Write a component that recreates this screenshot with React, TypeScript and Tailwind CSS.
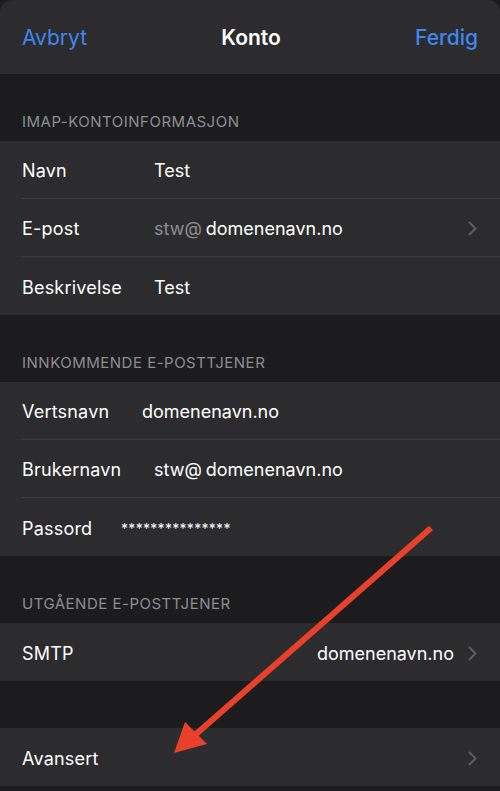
const font = { fontFamily: 'Inter, "Noto Sans", sans-serif' };

function Chevron() {
  return (
    <svg width="9" height="15" viewBox="0 0 9 15" className="shrink-0">
      <path d="M1.5 1.5l6 6-6 6" fill="none" stroke="#5d5d62" strokeWidth={2} strokeLinecap="round" strokeLinejoin="round" />
    </svg>
  );
}

type Row = { label: string; value?: React.ReactNode; valueX?: string; chevron?: boolean; right?: boolean };

function Group({ rows }: { rows: Row[] }) {
  return (
    <div className="bg-[#2c2c2e]">
      {rows.map((r, i) => (
        <div key={r.label} className="pl-[22px]">
          <div className={`h-[58px] flex items-center pt-[2px] pr-[23px] ${i < rows.length - 1 ? "border-b border-[#3d3d41]" : ""}`}>
            <span className={`text-white text-[18px] tracking-[0.2px] ${r.valueX ?? ""}`}>{r.label}</span>
            <div className={`flex-1 flex items-center text-[18px] text-white ${r.right ? "justify-end pr-[14px]" : ""}`}>{r.value}</div>
            {r.chevron && <Chevron />}
          </div>
        </div>
      ))}
    </div>
  );
}

function Header({ text }: { text: string }) {
  return (
    <div className="h-[67px] flex items-end pb-[8px] pl-[22px] text-[15px] tracking-[0.5px] text-[#8d8d93]">{text}</div>
  );
}

export default function App() {
  return (
    <div className="relative w-[500px] h-[791px] overflow-hidden bg-[#1c1c1e]" style={font}>
      <div className="h-[74px] bg-[#2c2c2e] rounded-t-[12px] flex items-center justify-between px-[22px] pt-[2px]">
        <span className="text-[#3f86f0] text-[21px]">Avbryt</span>
        <span className="text-white text-[21px] font-semibold">Konto</span>
        <span className="text-[#3f86f0] text-[21px] font-medium">Ferdig</span>
      </div>

      <Header text="IMAP-KONTOINFORMASJON" />
      <Group
        rows={[
          { label: "Navn", valueX: "w-[132px]", value: "Test" },
          {
            label: "E-post",
            valueX: "w-[132px]",
            chevron: true,
            value: (
              <>
                <span className="text-[#8d8d93]">stw@</span>
                <span className="ml-[4px]">domenenavn.no</span>
              </>
            ),
          },
          { label: "Beskrivelse", valueX: "w-[132px]", value: "Test" },
        ]}
      />

      <Header text="INNKOMMENDE E-POSTTJENER" />
      <Group
        rows={[
          { label: "Vertsnavn", valueX: "w-[120px]", value: "domenenavn.no" },
          {
            label: "Brukernavn",
            valueX: "w-[132px]",
            value: (
              <>
                <span>stw@</span>
                <span className="ml-[4px]">domenenavn.no</span>
              </>
            ),
          },
          { label: "Passord", valueX: "w-[99px]", value: <span className="text-[14px] tracking-[0.3px]">***************</span> },
        ]}
      />

      <Header text="UTGÅENDE E-POSTTJENER" />
      <Group rows={[{ label: "SMTP", value: "domenenavn.no", right: true, chevron: true }]} />

      <div className="h-[47px]" />
      <Group rows={[{ label: "Avansert", chevron: true }]} />

      <svg className="absolute inset-0 pointer-events-none" width="500" height="791" viewBox="0 0 500 791">
        <line x1="431" y1="528" x2="195" y2="735" stroke="#e8402b" strokeWidth="6" />
        <polygon points="174,753 185,722 207,744" fill="#e8402b" />
      </svg>
    </div>
  );
}
